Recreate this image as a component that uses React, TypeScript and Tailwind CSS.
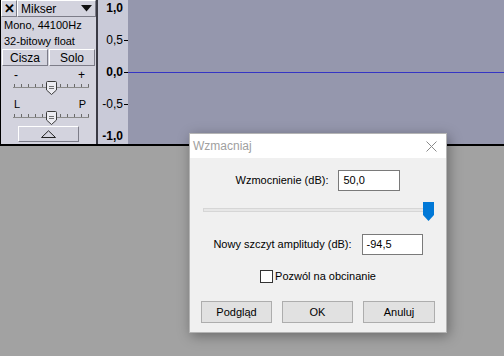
import React from "react";

const Thumb = ({ x }: { x: number }) => (
  <g transform={`translate(${x},0)`}>
    <path d="M1.5 0.5 H9.5 Q10.5 0.5 10.5 1.5 V9 L5.5 13.5 L0.5 9 V1.5 Q0.5 0.5 1.5 0.5 Z" fill="#ececf2" stroke="#3c3c3c" />
    <line x1="3" y1="5.5" x2="8" y2="5.5" stroke="#707070" />
    <line x1="3" y1="7.5" x2="8" y2="7.5" stroke="#707070" />
  </g>
);

const SliderLine = () => {
  const ticks = [13, 20, 27, 34, 41, 59, 66, 73, 80, 87];
  return (
    <svg width="96" height="15" viewBox="0 0 96 15">
      <line x1="12" y1="6.5" x2="88" y2="6.5" stroke="#8a8a8a" />
      {ticks.map((t) => (
        <line key={t} x1={t + 0.5} y1="3" x2={t + 0.5} y2="6" stroke="#6a6a6a" />
      ))}
      <Thumb x={45} />
    </svg>
  );
};

const Btn3d = "border border-t-white border-l-white border-r-[#7c7c88] border-b-[#7c7c88] bg-[#d3d3de]";

function ControlPanel() {
  return (
    <div className="w-[98px] h-full bg-[#d3d3de] border-l border-l-black border-r-2 border-r-[#3a3a44] flex flex-col text-[11px] text-black">
      <div className="flex h-[17px]">
        <div className={`w-[16px] h-[17px] flex items-center justify-center font-bold text-[13px] leading-none ${Btn3d}`}>
          ✕
        </div>
        <div className={`flex-1 h-[17px] flex items-center justify-between pl-[3px] pr-[3px] ${Btn3d}`}>
          <span className="text-[12px]">Mikser</span>
          <svg width="11" height="7" viewBox="0 0 11 7">
            <path d="M0 0 H11 L5.5 6.5 Z" fill="#111" />
          </svg>
        </div>
      </div>
      <div className="h-[16px] pl-[3px] flex items-center">Mono, 44100Hz</div>
      <div className="h-[16px] pl-[3px] flex items-center">32-bitowy float</div>
      <div className="flex h-[17px] gap-[1px] px-[1px]">
        <div className={`flex-1 flex items-center justify-center text-[12px] ${Btn3d}`}>Cisza</div>
        <div className={`flex-1 flex items-center justify-center text-[12px] ${Btn3d}`}>Solo</div>
      </div>
      <div className="h-[31px] flex flex-col">
        <div className="h-[15px] pt-[3px] flex justify-between pl-[13px] pr-[11px] leading-[12px] text-[12px]">
          <span>-</span>
          <span>+</span>
        </div>
        <SliderLine />
      </div>
      <div className="h-[29px] flex flex-col">
        <div className="h-[14px] pt-[1px] flex justify-between pl-[13px] pr-[10px] leading-[12px] text-[11px]">
          <span>L</span>
          <span>P</span>
        </div>
        <SliderLine />
      </div>
      <div className="flex justify-center">
        <div className={`w-[61px] h-[16px] flex items-center justify-center ${Btn3d}`}>
          <svg width="15" height="8" viewBox="0 0 15 8">
            <path d="M0.5 7.5 L7.5 0.8 L14.5 7.5 Z" fill="none" stroke="#222" />
          </svg>
        </div>
      </div>
    </div>
  );
}

function Ruler() {
  const Tick = () => <span className="w-[4px] h-[1px] bg-black ml-[1px]" />;
  return (
    <div className="w-[30px] h-full bg-[#c9cad8] flex flex-col justify-between py-[1px] text-[12px] text-black">
      <div className="h-[14px] flex items-center justify-end pr-[5px] font-bold">1,0</div>
      <div className="h-[14px] flex items-center justify-end">
        <span>0,5</span>
        <Tick />
      </div>
      <div className="h-[14px] flex items-center justify-end font-bold">
        <span>0,0</span>
        <Tick />
      </div>
      <div className="h-[14px] flex items-center justify-end">
        <span>-0,5</span>
        <Tick />
      </div>
      <div className="h-[14px] flex items-center justify-end pr-[5px] font-bold">-1,0</div>
    </div>
  );
}

function Wave() {
  return (
    <div className="flex-1 h-full bg-[#9597ad] flex items-center">
      <div className="w-full h-[1px] bg-[#3535c4]" />
    </div>
  );
}

function Dialog() {
  return (
    <div className="absolute left-[189px] top-[133px] w-[258px] h-[200px] bg-[#f0f0f0] border border-[#b4b4b4] shadow-[2px_3px_12px_rgba(0,0,0,0.35)] flex flex-col text-[11px] text-black">
      <div className="h-[24px] bg-white flex items-center justify-between pl-[3px] pr-[9px]">
        <span className="text-[12px] text-[#a0a0a0]">Wzmacniaj</span>
        <svg width="11" height="11" viewBox="0 0 11 11">
          <path d="M0.5 0.5 L10.5 10.5 M10.5 0.5 L0.5 10.5" stroke="#8a8a8a" strokeWidth="1" />
        </svg>
      </div>
      <div className="flex flex-col items-center pt-[12px]">
        <div className="flex items-center gap-[10px] h-[21px]">
          <span>Wzmocnienie (dB):</span>
          <div className="w-[62px] h-[21px] border border-[#7a7a7a] bg-white pl-[4px] flex items-center">50,0</div>
        </div>
        <div className="mt-[11px] w-full pl-[13px] pr-[12px] h-[19px] relative flex items-center">
          <div className="w-full h-[4px] bg-[#e7e7e7] border border-[#d6d6d6] mt-[-4px]" />
          <svg className="absolute right-[12px] top-0" width="11" height="19" viewBox="0 0 11 19">
            <path d="M0 0 H11 V13 L5.5 19 L0 13 Z" fill="#0078d7" />
          </svg>
        </div>
        <div className="mt-[13px] flex items-center gap-[10px] h-[21px]">
          <span>Nowy szczyt amplitudy (dB):</span>
          <div className="w-[61px] h-[21px] border border-[#7a7a7a] bg-white pl-[4px] flex items-center">-94,5</div>
        </div>
        <div className="mt-[14px] flex items-center h-[14px]">
          <div className="w-[13px] h-[13px] border border-[#333] bg-white" />
          <span className="ml-[2px]">Pozwól na obcinanie</span>
        </div>
        <div className="mt-[18px] flex gap-[10px]">
          <div className="w-[71px] h-[22px] bg-[#e1e1e1] border border-[#adadad] flex items-center justify-center">Podgląd</div>
          <div className="w-[71px] h-[22px] bg-[#e1e1e1] border border-[#adadad] flex items-center justify-center">OK</div>
          <div className="w-[72px] h-[22px] bg-[#e1e1e1] border border-[#adadad] flex items-center justify-center">Anuluj</div>
        </div>
      </div>
    </div>
  );
}

export default function App() {
  return (
    <div className="relative w-[504px] h-[356px] bg-[#a2a2a2] overflow-hidden font-['Liberation_Sans',Arial,sans-serif]">
      <div className="flex h-[146px] border-b-2 border-black">
        <ControlPanel />
        <Ruler />
        <Wave />
      </div>
      <Dialog />
    </div>
  );
}
